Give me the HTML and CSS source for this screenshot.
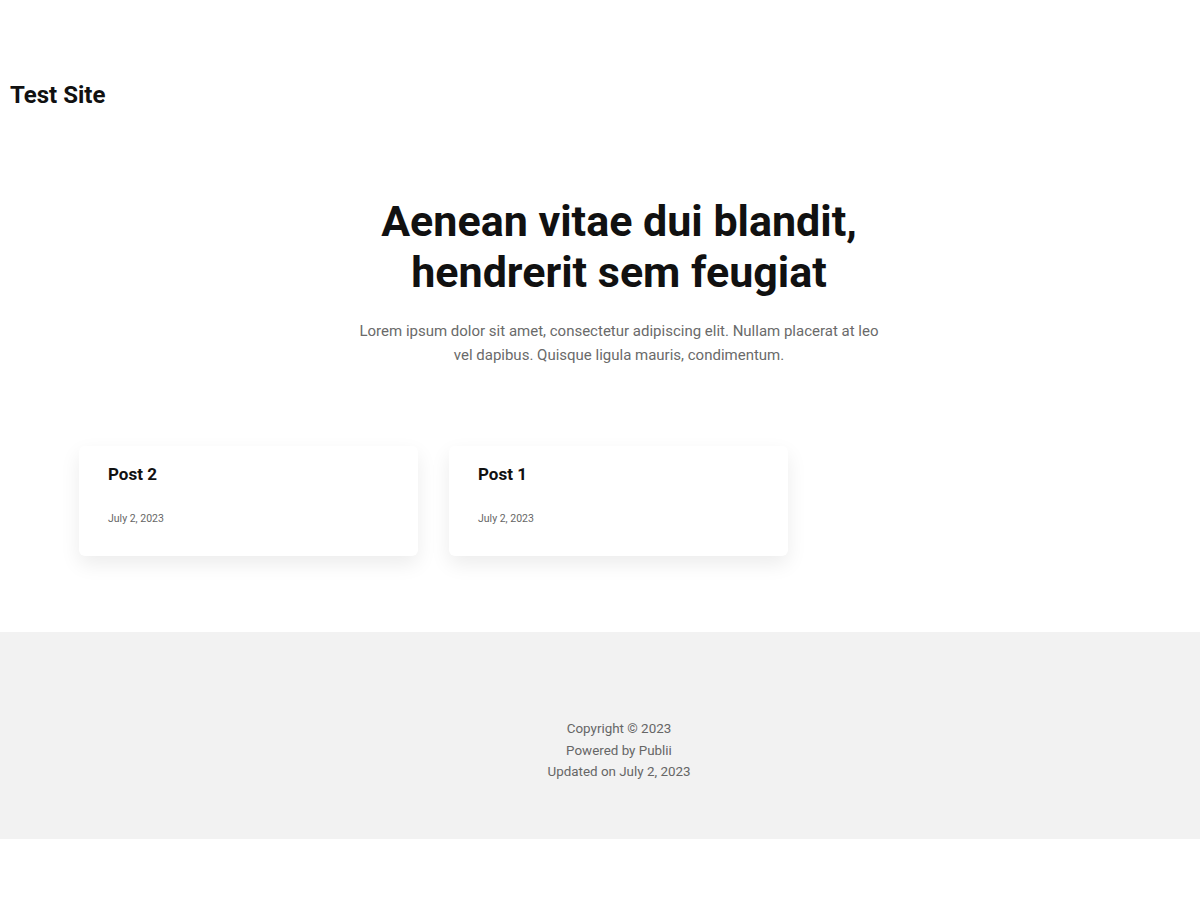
FILE: index.html
```html
<!DOCTYPE html>
<html lang="en">
<head>
<meta charset="utf-8">
<title>Test Site</title>
<link rel="stylesheet" href="styles.css">
</head>
<body>
<header class="site-header">
  <a class="logo" href="#">Test Site</a>
</header>
<main>
  <section class="hero">
    <h1 class="hero-title">Aenean vitae dui blandit, hendrerit sem feugiat</h1>
    <p class="hero-text">Lorem ipsum dolor sit amet, consectetur adipiscing elit. Nullam placerat at leo vel dapibus. Quisque ligula mauris, condimentum.</p>
  </section>
  <section class="posts">
    <article class="card">
      <h2 class="card-title">Post 2</h2>
      <time class="card-date">July 2, 2023</time>
    </article>
    <article class="card">
      <h2 class="card-title">Post 1</h2>
      <time class="card-date">July 2, 2023</time>
    </article>
  </section>
</main>
<footer class="site-footer">
  <p>Copyright © 2023</p>
  <p>Powered by Publii</p>
  <p>Updated on July 2, 2023</p>
</footer>
</body>
</html>
```
FILE: styles.css
```css
* { box-sizing: border-box; }
html, body { margin: 0; padding: 0; background: #fff; }
body {
  font-family: Roboto, "Liberation Sans", sans-serif;
  color: #111;
}
.site-header {
  height: 190px;
  display: flex;
  align-items: center;
  padding: 0 10px;
}
.logo {
  font-size: 24px;
  font-weight: 700;
  color: #111;
  text-decoration: none;
}
.hero {
  display: flex;
  flex-direction: column;
  align-items: center;
  text-align: center;
  padding-left: 38px;
  padding-top: 6px;
}
.hero-title {
  margin: 0;
  font-size: 43px;
  line-height: 51px;
  font-weight: 700;
  max-width: 520px;
}
.hero-text {
  margin: 21px 0 0;
  max-width: 540px;
  font-size: 15px;
  line-height: 24px;
  color: #6a6a6a;
}
.posts {
  display: grid;
  grid-template-columns: repeat(3, 339px);
  gap: 31px;
  padding: 79px 0 76px 79px;
}
.card {
  background: #fff;
  border-radius: 6px;
  box-shadow: 0 8px 20px rgba(0,0,0,0.08);
  padding: 16px 29px 30px;
  height: 110px;
  display: flex;
  flex-direction: column;
}
.card-title {
  margin: 0;
  font-size: 17px;
  line-height: 24px;
  font-weight: 700;
}
.card-date {
  margin-top: 26px;
  font-size: 10.5px;
  color: #666;
}
.site-footer {
  background: #f2f2f2;
  height: 207px;
  display: flex;
  flex-direction: column;
  align-items: center;
  padding-left: 38px;
  padding-top: 86px;
}
.site-footer p {
  margin: 0;
  font-size: 13.4px;
  line-height: 21.6px;
  color: #666;
}
```
